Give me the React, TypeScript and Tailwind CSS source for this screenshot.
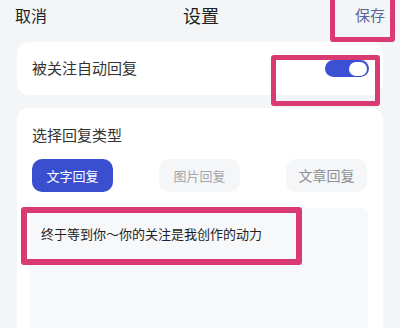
export default function App() {
  const tabs = [
    { label: "文字回复", cls: "bg-[#3a4fcf] text-white text-[13px]" },
    { label: "图片回复", cls: "bg-[#f5f6f8] text-[#a3a6ab] text-[13px]" },
    { label: "文章回复", cls: "bg-[#f5f6f8] text-[#8c8f95] text-[14px]" },
  ];

  return (
    <div
      className="relative flex h-[328px] w-[400px] flex-col overflow-hidden bg-[#f4f5f7] text-[#222]"
      style={{ fontFamily: '"Noto Sans CJK SC", "Noto Sans", sans-serif' }}
    >
      {/* header */}
      <div className="flex h-[30px] items-center justify-between px-[15px]">
        <span className="text-[16px] text-[#1f1f1f]">取消</span>
        <span className="text-[18px] text-[#1f1f1f]">设置</span>
        <span className="text-[15px] text-[#56669a]">保存</span>
      </div>

      {/* auto reply switch */}
      <div className="mx-[17px] mt-[12px] flex h-[53px] items-center justify-between rounded-xl bg-white pl-[15px] pr-[14px]">
        <span className="text-[15px] text-[#333]">被关注自动回复</span>
        <div className="flex h-[17px] w-[44px] items-center justify-end rounded-full bg-[#3c50d4] px-[2px]">
          <div className="h-[14px] w-[18px] rounded-full bg-white" />
        </div>
      </div>

      {/* reply type */}
      <div className="mx-[17px] mt-[13px] flex flex-1 flex-col rounded-t-xl bg-white pl-[15px] pt-[16px]">
        <span className="text-[15px] leading-[22px] text-[#333]">选择回复类型</span>
        <div className="mt-[13px] flex gap-[46px]">
          {tabs.map((t) => (
            <div
              key={t.label}
              className={`flex h-[33px] w-[81px] items-center justify-center rounded-[10px] ${t.cls}`}
            >
              {t.label}
            </div>
          ))}
        </div>
        <div className="-ml-[2px] mt-[16px] w-[338px] flex-1 rounded-t-md bg-[#f7f8fa] pl-[11px] pt-[12px]">
          <span className="text-[13px] leading-[20px] text-[#222]">
            终于等到你～你的关注是我创作的动力
          </span>
        </div>
      </div>

      {/* annotation boxes */}
      <div className="absolute left-[330px] top-[-5px] h-[47px] w-[65px] rounded-[3px] border-[5px] border-[#d93a72]" />
      <div className="absolute left-[271px] top-[55px] h-[51px] w-[109px] rounded-[3px] border-[5px] border-[#d93a72]" />
      <div className="absolute left-[21px] top-[207px] h-[58px] w-[281px] rounded-[3px] border-[6px] border-[#d93a72]" />
    </div>
  );
}
